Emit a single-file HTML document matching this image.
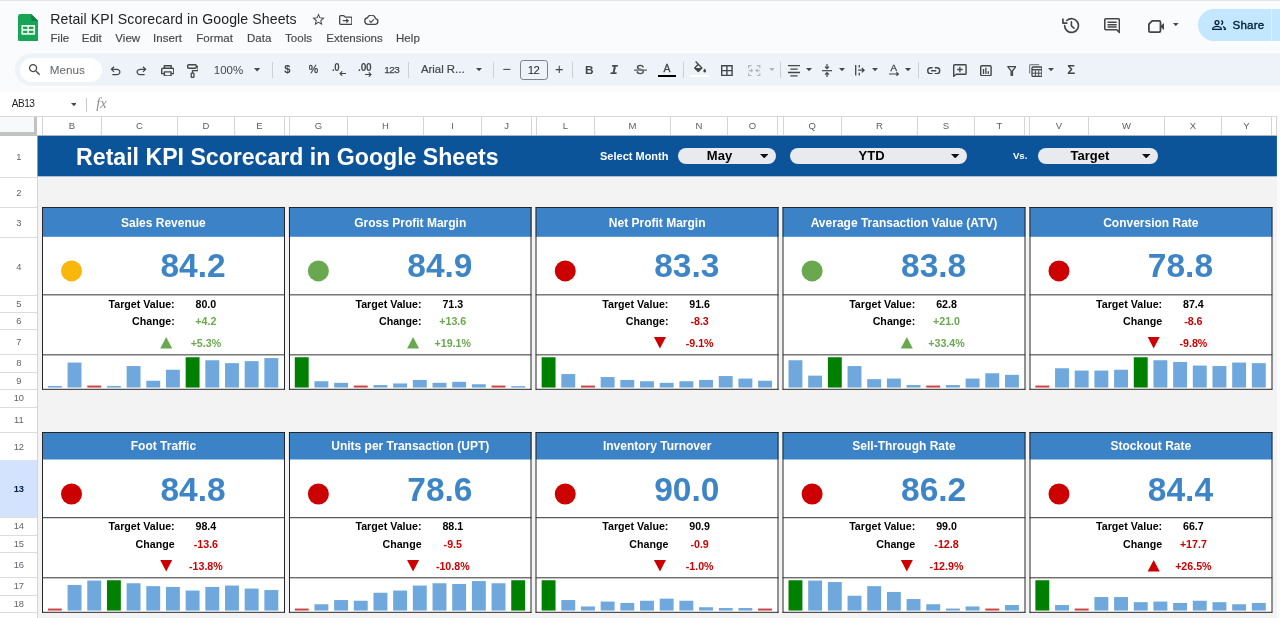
<!DOCTYPE html>
<html lang="en"><head><meta charset="utf-8"><title>Retail KPI Scorecard in Google Sheets</title>
<style>
html,body{margin:0;padding:0}
body{width:1280px;height:618px;overflow:hidden;background:#f9fbfd;font-family:'Liberation Sans', sans-serif;position:relative}
#app{position:absolute;left:0;top:0;width:1280px;height:618px;overflow:hidden;will-change:transform}
#app div, #app svg.a{position:absolute}
.t{white-space:nowrap;overflow:visible}

</style></head><body>
<div id="app">
<div style="left:0px;top:0px;width:1280px;height:1px;background:#e3e5e8"></div>
<svg class="a" style="left:17.9px;top:13.7px" width="20.3" height="27.6" viewBox="0 0 20.3 27.6" ><path d="M2.4 0h10.8l7.1 7.1v18.1a2.4 2.4 0 0 1-2.4 2.4H2.4a2.4 2.4 0 0 1-2.4-2.4V2.4a2.4 2.4 0 0 1 2.4-2.4z" fill="#16a455"/><path d="M13.2 0l7.1 7.1h-5.1a2 2 0 0 1-2-2z" fill="#0c8043"/><path d="M3.4 11.1h13.7v9.6H3.4z M5.1 12.7v2.4h4.3v-2.4z M11 12.7v2.4h4.4v-2.4z M5.1 16.7v2.4h4.3v-2.4z M11 16.7v2.4h4.4v-2.4z" fill="#e8f5e9" fill-rule="evenodd"/></svg>
<div class="t" style="left:50.2px;top:9.4px;height:20px;line-height:20px;font-size:14.1px;color:#1f1f1f;letter-spacing:0.1px">Retail KPI Scorecard in Google Sheets</div>
<div class="t" style="left:50.5px;top:29.7px;height:16px;line-height:16px;font-size:11.5px;color:#444746;letter-spacing:0.04px;-webkit-text-stroke:0.15px #444746">File</div>
<div class="t" style="left:81.8px;top:29.7px;height:16px;line-height:16px;font-size:11.5px;color:#444746;letter-spacing:0.04px;-webkit-text-stroke:0.15px #444746">Edit</div>
<div class="t" style="left:115.3px;top:29.7px;height:16px;line-height:16px;font-size:11.5px;color:#444746;letter-spacing:0.04px;-webkit-text-stroke:0.15px #444746">View</div>
<div class="t" style="left:153px;top:29.7px;height:16px;line-height:16px;font-size:11.5px;color:#444746;letter-spacing:0.04px;-webkit-text-stroke:0.15px #444746">Insert</div>
<div class="t" style="left:196.3px;top:29.7px;height:16px;line-height:16px;font-size:11.5px;color:#444746;letter-spacing:0.04px;-webkit-text-stroke:0.15px #444746">Format</div>
<div class="t" style="left:247px;top:29.7px;height:16px;line-height:16px;font-size:11.5px;color:#444746;letter-spacing:0.04px;-webkit-text-stroke:0.15px #444746">Data</div>
<div class="t" style="left:285px;top:29.7px;height:16px;line-height:16px;font-size:11.5px;color:#444746;letter-spacing:0.04px;-webkit-text-stroke:0.15px #444746">Tools</div>
<div class="t" style="left:326.2px;top:29.7px;height:16px;line-height:16px;font-size:11.5px;color:#444746;letter-spacing:0.04px;-webkit-text-stroke:0.15px #444746">Extensions</div>
<div class="t" style="left:396px;top:29.7px;height:16px;line-height:16px;font-size:11.5px;color:#444746;letter-spacing:0.04px;-webkit-text-stroke:0.15px #444746">Help</div>
<svg class="a" style="left:311.3px;top:12.4px" width="15" height="15" viewBox="0 0 24 24" ><path d="M22 9.24l-7.19-.62L12 2 9.19 8.63 2 9.24l5.46 4.73L5.82 21 12 17.27 18.18 21l-1.63-7.03L22 9.24zM12 15.4l-3.76 2.27 1-4.28-3.32-2.88 4.38-.38L12 6.1l1.71 4.04 4.38.38-3.32 2.88 1 4.28L12 15.4z" fill="#444746" /></svg>
<svg class="a" style="left:338.5px;top:14.8px" width="13.6" height="10" viewBox="0 0 13.6 10" ><path d="M0.7 1.6a0.9 0.9 0 0 1 .9-.9h3.2l1.4 1.4h5.8a0.9 0.9 0 0 1 .9.9v5.4a0.9 0.9 0 0 1-.9.9H1.6a0.9 0.9 0 0 1-.9-.9z" fill="none" stroke="#444746" stroke-width="1.3" stroke-linejoin="round"/><path d="M3.8 5.7h5.2M7.3 3.8l1.9 1.9-1.9 1.9" fill="none" stroke="#444746" stroke-width="1.2"/></svg>
<svg class="a" style="left:364px;top:14.8px" width="15" height="10" viewBox="0 0 15 10" ><path d="M4 9.3a3.3 3.3 0 0 1-.5-6.55 4.2 4.2 0 0 1 8 .9A2.85 2.85 0 0 1 11.4 9.3z" fill="none" stroke="#444746" stroke-width="1.3" stroke-linejoin="round"/><path d="M5.3 5.7l1.6 1.6 3-3" fill="none" stroke="#444746" stroke-width="1.2"/></svg>
<svg class="a" style="left:1062.4px;top:16.9px" width="17.6" height="17" viewBox="0 0 17.6 17" ><path d="M2.6 8.5a6.9 6.9 0 1 0 2.2-5" fill="none" stroke="#444746" stroke-width="1.7" stroke-linecap="round"/><path d="M0.9 2.2v3.9h3.9" fill="none" stroke="#444746" stroke-width="1.7" stroke-linecap="round" stroke-linejoin="round"/><path d="M9.4 4.8v4l2.6 2.3" fill="none" stroke="#444746" stroke-width="1.6" stroke-linecap="round" stroke-linejoin="round"/></svg>
<svg class="a" style="left:1103.6px;top:17.6px" width="16.6" height="16" viewBox="0 0 16.6 16" ><path d="M1.8 0.8h12.6a1 1 0 0 1 1 1v12.6l-2.7-2.7H1.8a1 1 0 0 1-1-1V1.8a1 1 0 0 1 1-1z" fill="none" stroke="#444746" stroke-width="1.6" stroke-linejoin="round"/><path d="M3.5 3.6h9.2v1.5H3.5zM3.5 5.9h9.2v1.5H3.5zM3.5 8.2h9.2v1.5H3.5z" fill="#444746"/></svg>
<svg class="a" style="left:1147.5px;top:19.7px" width="16.8" height="13" viewBox="0 0 16.8 13" ><path d="M4.2 0.9h6.9a1.4 1.4 0 0 1 1.4 1.4v8.4a1.4 1.4 0 0 1-1.4 1.4H2.3a1.4 1.4 0 0 1-1.4-1.4V4.2z" fill="none" stroke="#444746" stroke-width="1.8" stroke-linejoin="round"/><path d="M12 6.5l4.6-3.9v7.8z" fill="#444746"/></svg>
<svg class="a" style="left:1173.0px;top:23.0px" width="5.6" height="3.2" viewBox="0 0 10 5" preserveAspectRatio="none"><path d="M0 0h10L5 5z" fill="#444746"/></svg>
<div style="left:1197.6px;top:9px;width:90px;height:32px;background:#c2e7ff;border-radius:16px 0 0 16px"></div>
<div style="left:1270.6px;top:9px;width:1px;height:32px;background:#e0f2ff"></div>
<svg class="a" style="left:1211.8px;top:19.8px" width="14" height="10.2" viewBox="0 0 14 10.2" ><circle cx="5" cy="2.6" r="1.95" fill="none" stroke="#001d35" stroke-width="1.3"/><path d="M0.7 9.4v-.7c0-1.5 2.6-2.3 4.3-2.3s4.3.8 4.3 2.3v.7z" fill="none" stroke="#001d35" stroke-width="1.3" stroke-linejoin="round"/><path d="M9.2 0.7a1.95 1.95 0 0 1 0 3.8M11 6.6c1.2.4 2.3 1.1 2.3 2.1v.7h-1.6" fill="none" stroke="#001d35" stroke-width="1.3"/></svg>
<div class="t" style="left:1232.6px;top:16.7px;height:16px;line-height:16px;font-size:11.6px;color:#001d35;font-weight:400;letter-spacing:0.15px;-webkit-text-stroke:0.35px #001d35">Share</div>
<svg class="a" style="left:0px;top:50px" width="1280" height="40" viewBox="0 50 1280 40" ><rect x="15" y="53.5" width="1300" height="32.2" rx="16" fill="#eef2f9"/></svg>
<div style="left:20.4px;top:57.6px;width:81.6px;height:24.4px;background:#fff;border-radius:12.2px"></div>
<svg class="a" style="left:27px;top:61.8px" width="15.4" height="15.4" viewBox="0 0 24 24" ><path d="M15.5 14h-.79l-.28-.27C15.41 12.59 16 11.11 16 9.5 16 5.91 13.09 3 9.5 3S3 5.91 3 9.5 5.91 16 9.5 16c1.61 0 3.09-.59 4.23-1.57l.27.28v.79l5 4.99L20.49 19l-4.99-5zm-6 0C7.01 14 5 11.99 5 9.5S7.01 5 9.5 5 14 7.01 14 9.5 11.99 14 9.5 14z" fill="#444746" /></svg>
<div class="t" style="left:49.7px;top:61.8px;height:16px;line-height:16px;font-size:11.7px;color:#5f6368">Menus</div>
<svg class="a" style="left:107.9px;top:63.8px" width="15" height="14.2" viewBox="0 0 24 24" preserveAspectRatio="none"><path d="M7 19v-2h7.1q1.575 0 2.738-1T18 13.5q0-1.5-1.162-2.5T14.1 10H7.8l2.6 2.6L9 14 4 9l5-5 1.4 1.4L7.8 8h6.3q2.425 0 4.163 1.575T20 13.5q0 2.35-1.737 3.925T14.1 19z" fill="#444746"/></svg>
<svg class="a" style="left:134px;top:63.8px" width="15" height="14.2" viewBox="0 0 24 24" preserveAspectRatio="none"><path d="M7 19v-2h7.1q1.575 0 2.738-1T18 13.5q0-1.5-1.162-2.5T14.1 10H7.8l2.6 2.6L9 14 4 9l5-5 1.4 1.4L7.8 8h6.3q2.425 0 4.163 1.575T20 13.5q0 2.35-1.737 3.925T14.1 19z" fill="#444746" transform="translate(24 0) scale(-1 1)"/></svg>
<svg class="a" style="left:160.7px;top:64.6px" width="13.5" height="11.6" viewBox="0 0 13.5 11.6" ><path d="M3.4 3.2V0.7h6.7v2.5" fill="none" stroke="#444746" stroke-width="1.4"/><path d="M3.2 8.6H0.7V4.6a1.4 1.4 0 0 1 1.4-1.4h9.3a1.4 1.4 0 0 1 1.4 1.4v4h-2.5" fill="none" stroke="#444746" stroke-width="1.4" stroke-linejoin="round"/><path d="M3.4 6.9h6.7v4H3.4z" fill="none" stroke="#444746" stroke-width="1.4" stroke-linejoin="round"/></svg>
<svg class="a" style="left:186.6px;top:63.8px" width="11.8" height="14.2" viewBox="0 0 11.8 14.2" ><rect x="0.7" y="0.7" width="8.6" height="3.6" rx="1" fill="none" stroke="#444746" stroke-width="1.4"/><path d="M9.3 2.5h1.8v4.1H5.5v2.4" fill="none" stroke="#444746" stroke-width="1.3" stroke-linejoin="round"/><rect x="4.2" y="9.1" width="2.7" height="4.4" rx="0.7" fill="none" stroke="#444746" stroke-width="1.3"/></svg>
<div class="t" style="left:213.8px;top:62.1px;height:16px;line-height:16px;font-size:11.5px;color:#444746">100%</div>
<svg class="a" style="left:254.4px;top:68.3px" width="6.2" height="3.4" viewBox="0 0 10 5" preserveAspectRatio="none"><path d="M0 0h10L5 5z" fill="#444746"/></svg>
<div style="left:271.5px;top:61.5px;width:1px;height:16.5px;background:#cdd0d5"></div>
<div class="t" style="left:284.2px;top:61.2px;height:16px;line-height:16px;font-size:11.2px;color:#444746;font-weight:700">$</div>
<div class="t" style="left:308.8px;top:61.3px;height:16px;line-height:16px;font-size:10.6px;color:#444746;-webkit-text-stroke:0.35px #444746">%</div>
<div class="t" style="left:332.1px;top:59.4px;height:16px;line-height:16px;font-size:11px;color:#444746;font-weight:700;letter-spacing:-0.4px;transform:scaleX(0.88);transform-origin:0 50%">.0</div>
<svg class="a" style="left:339.2px;top:71.3px" width="7" height="5" viewBox="0 0 7 5" ><path d="M7 2.5H1.2M3.2 0.3L1 2.5l2.2 2.2" fill="none" stroke="#444746" stroke-width="1.1"/></svg>
<div class="t" style="left:357.7px;top:59.4px;height:16px;line-height:16px;font-size:11px;color:#444746;font-weight:700;letter-spacing:-0.2px;transform:scaleX(0.92);transform-origin:0 50%">.00</div>
<svg class="a" style="left:364.6px;top:71.9px" width="7" height="5" viewBox="0 0 7 5" ><path d="M0 2.5h5.8M3.8 0.3L6 2.5 3.8 4.7" fill="none" stroke="#444746" stroke-width="1.1"/></svg>
<div class="t" style="left:384.2px;top:62px;height:16px;line-height:16px;font-size:9.9px;color:#444746;letter-spacing:-0.4px;-webkit-text-stroke:0.25px #444746">123</div>
<div style="left:407.5px;top:61.5px;width:1px;height:16.5px;background:#cdd0d5"></div>
<div class="t" style="left:420.9px;top:60.9px;height:16px;line-height:16px;font-size:11.4px;color:#444746;-webkit-text-stroke:0.2px #444746">Arial R...</div>
<svg class="a" style="left:475.9px;top:68.1px" width="6" height="3.2" viewBox="0 0 10 5" preserveAspectRatio="none"><path d="M0 0h10L5 5z" fill="#444746"/></svg>
<div style="left:493.0px;top:61.5px;width:1px;height:16.5px;background:#cdd0d5"></div>
<div class="t" style="left:502.6px;top:61.1px;height:16px;line-height:16px;font-size:14.6px;color:#444746">−</div>
<div style="left:520px;top:60.4px;width:27.5px;height:19.4px;border:1px solid #7d8287;border-radius:3.2px;box-sizing:border-box"></div>
<div class="t" style="left:520px;top:62px;height:16px;line-height:16px;font-size:11.4px;color:#1f1f1f;width:27.5px;text-align:center;letter-spacing:-0.6px;text-indent:-0.6px">12</div>
<div class="t" style="left:555.1px;top:61.1px;height:16px;line-height:16px;font-size:14.6px;color:#444746">+</div>
<div style="left:572.3px;top:61.5px;width:1px;height:16.5px;background:#cdd0d5"></div>
<div class="t" style="left:584.9px;top:61.9px;height:16px;line-height:16px;font-size:11.8px;color:#444746;font-weight:700">B</div>
<div class="t" style="left:610.3px;top:63px;height:16px;line-height:16px;font-size:12.8px;-webkit-text-stroke:0.2px #444746;color:#444746;font-weight:700;font-style:italic;font-family:'Liberation Mono',monospace">I</div>
<div class="t" style="left:636.1px;top:61.6px;height:16px;line-height:16px;font-size:12.6px;color:#444746;-webkit-text-stroke:0.3px #444746">S</div>
<svg class="a" style="left:633.6px;top:68.6px" width="13.4" height="2.4" viewBox="0 0 13.4 2.4" ><rect x="0" y="0" width="13.4" height="0.55" fill="#eef2f9"/><rect x="0" y="0.55" width="13.4" height="1.25" fill="#444746"/><rect x="0" y="1.8" width="13.4" height="0.6" fill="#eef2f9"/></svg>
<div class="t" style="left:663.4px;top:60.8px;height:16px;line-height:16px;font-size:10.4px;color:#444746;-webkit-text-stroke:0.3px #444746">A</div>
<div style="left:658px;top:74.7px;width:18.3px;height:2.6px;background:#000"></div>
<div style="left:683.0px;top:61.5px;width:1px;height:16.5px;background:#cdd0d5"></div>
<svg class="a" style="left:693.5px;top:61px" width="12.4" height="12" viewBox="0 0 12.4 12" ><path d="M1.6 0.6l6.3 6.3-3.6 3.6-3.6-3.6 3.9-3.9" fill="none" stroke="#444746" stroke-width="1.4" stroke-linejoin="round"/><path d="M1.2 6.9h6.7l-3.6 3.6z" fill="#444746"/><path d="M10.7 7.6s1.4 1.6 1.4 2.5a1.4 1.4 0 0 1-2.8 0c0-.9 1.4-2.5 1.4-2.5z" fill="#444746"/></svg>
<div style="left:690px;top:74.7px;width:19px;height:2.6px;background:#fff"></div>
<svg class="a" style="left:721.2px;top:65px" width="11.8" height="11.2" viewBox="0 0 11.8 11.2" ><path d="M0.7 0.7h10.4v9.8H0.7zM5.9 0.7v9.8M0.7 5.6h10.4" fill="none" stroke="#444746" stroke-width="1.4"/></svg>
<svg class="a" style="left:748.4px;top:65px" width="12.4" height="11.2" viewBox="0 0 12.4 11.2" ><path d="M0.6 3.2V0.6h3M8.8 0.6h3v2.6M11.8 8v2.6h-3M3.6 10.6h-3V8" fill="none" stroke="#b4b8bd" stroke-width="1.2"/><path d="M0.6 5.6h3.6M2.9 4l1.6 1.6-1.6 1.6M11.8 5.6H8.2M9.5 4L7.9 5.6l1.6 1.6" fill="none" stroke="#b4b8bd" stroke-width="1.1"/></svg>
<svg class="a" style="left:768.7px;top:68.3px" width="5.8" height="3.2" viewBox="0 0 10 5" preserveAspectRatio="none"><path d="M0 0h10L5 5z" fill="#b4b8bd"/></svg>
<div style="left:779.9px;top:61.5px;width:1px;height:16.5px;background:#cdd0d5"></div>
<svg class="a" style="left:787.7px;top:64.8px" width="12" height="12" viewBox="0 0 12 12" ><path d="M0 0.7h12M2.4 4.1h7.2M0 7.5h12M2.4 10.9h7.2" stroke="#444746" stroke-width="1.3"/></svg>
<svg class="a" style="left:806.0px;top:68.3px" width="6" height="3.2" viewBox="0 0 10 5" preserveAspectRatio="none"><path d="M0 0h10L5 5z" fill="#444746"/></svg>
<svg class="a" style="left:822.4px;top:63.6px" width="10" height="13.4" viewBox="0 0 10 13.4" ><path d="M0 6.7h10" stroke="#444746" stroke-width="1.2"/><path d="M5 0v4.4M3 2.7l2 2 2-2M5 13.4V9M3 10.7l2-2 2 2" fill="none" stroke="#444746" stroke-width="1.2"/></svg>
<svg class="a" style="left:838.5px;top:68.3px" width="6" height="3.2" viewBox="0 0 10 5" preserveAspectRatio="none"><path d="M0 0h10L5 5z" fill="#444746"/></svg>
<svg class="a" style="left:855px;top:65.4px" width="10.2" height="10.4" viewBox="0 0 10.2 10.4" ><path d="M0.7 0v10.4M4.3 0v2.6M4.3 7.8v2.6" stroke="#444746" stroke-width="1.3"/><path d="M3.2 5.2h5.6M6.8 3l2.3 2.2-2.3 2.2" fill="none" stroke="#444746" stroke-width="1.3"/></svg>
<svg class="a" style="left:872.0px;top:68.3px" width="6" height="3.2" viewBox="0 0 10 5" preserveAspectRatio="none"><path d="M0 0h10L5 5z" fill="#444746"/></svg>
<div class="t" style="left:890.6px;top:59.7px;height:16px;line-height:16px;font-size:9.8px;color:#444746;-webkit-text-stroke:0.3px #444746">A</div>
<svg class="a" style="left:889px;top:72.1px" width="10.6" height="4" viewBox="0 0 10.6 4" ><path d="M0 2h9M7.4 0.3l2 1.7-2 1.7" fill="none" stroke="#444746" stroke-width="1.2"/></svg>
<svg class="a" style="left:905.3px;top:68.3px" width="6" height="3.2" viewBox="0 0 10 5" preserveAspectRatio="none"><path d="M0 0h10L5 5z" fill="#444746"/></svg>
<div style="left:918.0px;top:61.5px;width:1px;height:16.5px;background:#cdd0d5"></div>
<svg class="a" style="left:927.2px;top:66.5px" width="13.4" height="7.4" viewBox="0 0 13.4 7.4" ><path d="M5.6 0.7H3.7a3 3 0 0 0 0 6h1.9M7.8 0.7h1.9a3 3 0 0 1 0 6H7.8M4.2 3.7h5" fill="none" stroke="#444746" stroke-width="1.4"/></svg>
<svg class="a" style="left:953.3px;top:64px" width="13.8" height="12.6" viewBox="0 0 13.8 12.6" ><path d="M1.5 0.7h10.8a0.8 0.8 0 0 1 .8.8v8a0.8 0.8 0 0 1-.8.8H3.2l-2.5 2V1.5a0.8 0.8 0 0 1 .8-.8z" fill="none" stroke="#444746" stroke-width="1.4" stroke-linejoin="round"/><path d="M6.9 2.8v5.4M4.2 5.5h5.4" stroke="#444746" stroke-width="1.3"/></svg>
<svg class="a" style="left:980.3px;top:64.6px" width="11.8" height="11.4" viewBox="0 0 11.8 11.4" ><rect x="0.7" y="0.7" width="10.4" height="10" rx="1.2" fill="none" stroke="#444746" stroke-width="1.4"/><path d="M3.5 4v5M5.9 2.8v6.2M8.3 6.2v2.8" stroke="#444746" stroke-width="1.3"/></svg>
<svg class="a" style="left:1006.8px;top:65.5px" width="9.6" height="10" viewBox="0 0 9.6 10" ><path d="M0.8 0.7h8L5.5 4.9v4.4H4.1V4.9z" fill="none" stroke="#444746" stroke-width="1.3" stroke-linejoin="round"/></svg>
<svg class="a" style="left:1028.6px;top:64px" width="13.6" height="13" viewBox="0 0 13.6 13" ><path d="M0.6 9.6V1.6a1 1 0 0 1 1-1h8.6" fill="none" stroke="#80868b" stroke-width="1.2"/><rect x="3" y="3" width="10" height="9.4" rx="1" fill="none" stroke="#444746" stroke-width="1.3"/><path d="M3 5h10v1.4H3z" fill="#444746"/><path d="M3 9.2h10M6.4 6.4v6M9.7 6.4v6" stroke="#444746" stroke-width="1"/></svg>
<svg class="a" style="left:1048.0px;top:68.3px" width="6" height="3.2" viewBox="0 0 10 5" preserveAspectRatio="none"><path d="M0 0h10L5 5z" fill="#444746"/></svg>
<div class="t" style="left:1067.3px;top:62.3px;height:16px;line-height:16px;font-size:13.2px;color:#444746;font-weight:700">Σ</div>
<div style="left:0px;top:92.4px;width:1280px;height:23.6px;background:#fff"></div>
<div class="t" style="left:11.8px;top:96.1px;height:16px;line-height:16px;font-size:10.1px;color:#1f1f1f;letter-spacing:-0.55px">AB13</div>
<svg class="a" style="left:70.5px;top:102.5px" width="5.8" height="3.2" viewBox="0 0 10 5" preserveAspectRatio="none"><path d="M0 0h10L5 5z" fill="#444746"/></svg>
<div style="left:85.8px;top:98.2px;width:1px;height:13.799999999999997px;background:#c7c7c7"></div>
<div class="t" style="left:96.3px;top:95.3px;height:16px;line-height:16px;font-size:14.5px;color:#8a8e92;font-style:italic;font-family:'Liberation Serif',serif;letter-spacing:-0.2px">fx</div>
<div style="left:0px;top:116px;width:1280px;height:502px;background:#f3f3f3"></div>
<div style="left:1277px;top:116px;width:3px;height:502px;background:#f9fbfd"></div>
<div style="left:0px;top:116px;width:1277px;height:20px;background:#fff;border-top:1px solid #d9d9d9;border-bottom:1px solid #d0d0d0;box-sizing:border-box"></div>
<div style="left:0px;top:136px;width:37.5px;height:482px;background:#fff;border-right:1px solid #d5d5d5;box-sizing:border-box"></div>
<div style="left:0px;top:117px;width:37px;height:18px;background:#f8f9fa"></div>
<div style="left:34.4px;top:117px;width:3px;height:19px;background:#c1c3c2"></div>
<div style="left:0px;top:132px;width:37.4px;height:3.6px;background:#c1c3c2"></div>
<div style="left:41.8px;top:117px;width:1px;height:19px;background:#d5d5d5"></div>
<div class="t hd" style="left:42.3px;top:116.8px;width:59.1px;height:18px;line-height:18px;text-align:center;font-size:9.5px;color:#5a5d60">B</div>
<div style="left:100.9px;top:117px;width:1px;height:19px;background:#d5d5d5"></div>
<div class="t hd" style="left:101.4px;top:116.8px;width:75.9px;height:18px;line-height:18px;text-align:center;font-size:9.5px;color:#5a5d60">C</div>
<div style="left:176.8px;top:117px;width:1px;height:19px;background:#d5d5d5"></div>
<div class="t hd" style="left:177.3px;top:116.8px;width:57.1px;height:18px;line-height:18px;text-align:center;font-size:9.5px;color:#5a5d60">D</div>
<div style="left:233.9px;top:117px;width:1px;height:19px;background:#d5d5d5"></div>
<div class="t hd" style="left:234.4px;top:116.8px;width:50.2px;height:18px;line-height:18px;text-align:center;font-size:9.5px;color:#5a5d60">E</div>
<div style="left:284.1px;top:117px;width:1px;height:19px;background:#d5d5d5"></div>
<div style="left:289.1px;top:117px;width:1px;height:19px;background:#d5d5d5"></div>
<div class="t hd" style="left:289.6px;top:116.8px;width:57.9px;height:18px;line-height:18px;text-align:center;font-size:9.5px;color:#5a5d60">G</div>
<div style="left:347.0px;top:117px;width:1px;height:19px;background:#d5d5d5"></div>
<div class="t hd" style="left:347.5px;top:116.8px;width:76.0px;height:18px;line-height:18px;text-align:center;font-size:9.5px;color:#5a5d60">H</div>
<div style="left:423.0px;top:117px;width:1px;height:19px;background:#d5d5d5"></div>
<div class="t hd" style="left:423.5px;top:116.8px;width:58.0px;height:18px;line-height:18px;text-align:center;font-size:9.5px;color:#5a5d60">I</div>
<div style="left:481.0px;top:117px;width:1px;height:19px;background:#d5d5d5"></div>
<div class="t hd" style="left:481.5px;top:116.8px;width:50.0px;height:18px;line-height:18px;text-align:center;font-size:9.5px;color:#5a5d60">J</div>
<div style="left:531.0px;top:117px;width:1px;height:19px;background:#d5d5d5"></div>
<div style="left:535.8px;top:117px;width:1px;height:19px;background:#d5d5d5"></div>
<div class="t hd" style="left:536.3px;top:116.8px;width:58.3px;height:18px;line-height:18px;text-align:center;font-size:9.5px;color:#5a5d60">L</div>
<div style="left:594.1px;top:117px;width:1px;height:19px;background:#d5d5d5"></div>
<div class="t hd" style="left:594.6px;top:116.8px;width:75.8px;height:18px;line-height:18px;text-align:center;font-size:9.5px;color:#5a5d60">M</div>
<div style="left:669.9px;top:117px;width:1px;height:19px;background:#d5d5d5"></div>
<div class="t hd" style="left:670.4px;top:116.8px;width:57.1px;height:18px;line-height:18px;text-align:center;font-size:9.5px;color:#5a5d60">N</div>
<div style="left:727.0px;top:117px;width:1px;height:19px;background:#d5d5d5"></div>
<div class="t hd" style="left:727.5px;top:116.8px;width:50.1px;height:18px;line-height:18px;text-align:center;font-size:9.5px;color:#5a5d60">O</div>
<div style="left:777.1px;top:117px;width:1px;height:19px;background:#d5d5d5"></div>
<div style="left:782.6px;top:117px;width:1px;height:19px;background:#d5d5d5"></div>
<div class="t hd" style="left:783.1px;top:116.8px;width:58.2px;height:18px;line-height:18px;text-align:center;font-size:9.5px;color:#5a5d60">Q</div>
<div style="left:840.8px;top:117px;width:1px;height:19px;background:#d5d5d5"></div>
<div class="t hd" style="left:841.3px;top:116.8px;width:76.2px;height:18px;line-height:18px;text-align:center;font-size:9.5px;color:#5a5d60">R</div>
<div style="left:917.0px;top:117px;width:1px;height:19px;background:#d5d5d5"></div>
<div class="t hd" style="left:917.5px;top:116.8px;width:56.9px;height:18px;line-height:18px;text-align:center;font-size:9.5px;color:#5a5d60">S</div>
<div style="left:973.9px;top:117px;width:1px;height:19px;background:#d5d5d5"></div>
<div class="t hd" style="left:974.4px;top:116.8px;width:50.1px;height:18px;line-height:18px;text-align:center;font-size:9.5px;color:#5a5d60">T</div>
<div style="left:1024.0px;top:117px;width:1px;height:19px;background:#d5d5d5"></div>
<div style="left:1029.0px;top:117px;width:1px;height:19px;background:#d5d5d5"></div>
<div class="t hd" style="left:1029.5px;top:116.8px;width:59.0px;height:18px;line-height:18px;text-align:center;font-size:9.5px;color:#5a5d60">V</div>
<div style="left:1088.0px;top:117px;width:1px;height:19px;background:#d5d5d5"></div>
<div class="t hd" style="left:1088.5px;top:116.8px;width:76.0px;height:18px;line-height:18px;text-align:center;font-size:9.5px;color:#5a5d60">W</div>
<div style="left:1164.0px;top:117px;width:1px;height:19px;background:#d5d5d5"></div>
<div class="t hd" style="left:1164.5px;top:116.8px;width:57.0px;height:18px;line-height:18px;text-align:center;font-size:9.5px;color:#5a5d60">X</div>
<div style="left:1221.0px;top:117px;width:1px;height:19px;background:#d5d5d5"></div>
<div class="t hd" style="left:1221.5px;top:116.8px;width:50.0px;height:18px;line-height:18px;text-align:center;font-size:9.5px;color:#5a5d60">Y</div>
<div style="left:1271.0px;top:117px;width:1px;height:19px;background:#d5d5d5"></div>
<div style="left:1276.2px;top:117px;width:1px;height:19px;background:#d5d5d5"></div>
<div class="t hd" style="left:0.3px;top:136.7px;width:37px;height:41px;line-height:41px;text-align:center;font-size:9.3px;color:#5f6368;">1</div>
<div style="left:0px;top:176.5px;width:37px;height:1px;background:#dcdcdc"></div>
<div class="t hd" style="left:0.3px;top:177.7px;width:37px;height:30px;line-height:30px;text-align:center;font-size:9.3px;color:#5f6368;">2</div>
<div style="left:0px;top:206.5px;width:37px;height:1px;background:#dcdcdc"></div>
<div class="t hd" style="left:0.3px;top:207.7px;width:37px;height:30px;line-height:30px;text-align:center;font-size:9.3px;color:#5f6368;">3</div>
<div style="left:0px;top:236.5px;width:37px;height:1px;background:#dcdcdc"></div>
<div class="t hd" style="left:0.3px;top:237.7px;width:37px;height:58px;line-height:58px;text-align:center;font-size:9.3px;color:#5f6368;">4</div>
<div style="left:0px;top:294.5px;width:37px;height:1px;background:#dcdcdc"></div>
<div class="t hd" style="left:0.3px;top:295.7px;width:37px;height:17px;line-height:17px;text-align:center;font-size:9.3px;color:#5f6368;">5</div>
<div style="left:0px;top:311.5px;width:37px;height:1px;background:#dcdcdc"></div>
<div class="t hd" style="left:0.3px;top:312.7px;width:37px;height:17.5px;line-height:17.5px;text-align:center;font-size:9.3px;color:#5f6368;">6</div>
<div style="left:0px;top:329.0px;width:37px;height:1px;background:#dcdcdc"></div>
<div class="t hd" style="left:0.3px;top:330.2px;width:37px;height:25.0px;line-height:25.0px;text-align:center;font-size:9.3px;color:#5f6368;">7</div>
<div style="left:0px;top:354.0px;width:37px;height:1px;background:#dcdcdc"></div>
<div class="t hd" style="left:0.3px;top:355.2px;width:37px;height:17.5px;line-height:17.5px;text-align:center;font-size:9.3px;color:#5f6368;">8</div>
<div style="left:0px;top:371.5px;width:37px;height:1px;background:#dcdcdc"></div>
<div class="t hd" style="left:0.3px;top:372.7px;width:37px;height:17.5px;line-height:17.5px;text-align:center;font-size:9.3px;color:#5f6368;">9</div>
<div style="left:0px;top:389.0px;width:37px;height:1px;background:#dcdcdc"></div>
<div class="t hd" style="left:0.3px;top:390.2px;width:37px;height:17.5px;line-height:17.5px;text-align:center;font-size:9.3px;color:#5f6368;">10</div>
<div style="left:0px;top:406.5px;width:37px;height:1px;background:#dcdcdc"></div>
<div class="t hd" style="left:0.3px;top:407.7px;width:37px;height:25px;line-height:25px;text-align:center;font-size:9.3px;color:#5f6368;">11</div>
<div style="left:0px;top:431.5px;width:37px;height:1px;background:#dcdcdc"></div>
<div class="t hd" style="left:0.3px;top:432.7px;width:37px;height:28px;line-height:28px;text-align:center;font-size:9.3px;color:#5f6368;">12</div>
<div style="left:0px;top:459.5px;width:37px;height:1px;background:#dcdcdc"></div>
<div style="left:0px;top:460px;width:37px;height:57.5px;background:#d3e3fd"></div>
<div class="t hd" style="left:0.3px;top:460.7px;width:37px;height:57.5px;line-height:57.5px;text-align:center;font-size:9.3px;color:#041e49;font-weight:700;">13</div>
<div style="left:0px;top:517.0px;width:37px;height:1px;background:#dcdcdc"></div>
<div class="t hd" style="left:0.3px;top:518.2px;width:37px;height:17.5px;line-height:17.5px;text-align:center;font-size:9.3px;color:#5f6368;">14</div>
<div style="left:0px;top:534.5px;width:37px;height:1px;background:#dcdcdc"></div>
<div class="t hd" style="left:0.3px;top:535.7px;width:37px;height:17.5px;line-height:17.5px;text-align:center;font-size:9.3px;color:#5f6368;">15</div>
<div style="left:0px;top:552.0px;width:37px;height:1px;background:#dcdcdc"></div>
<div class="t hd" style="left:0.3px;top:553.2px;width:37px;height:25.0px;line-height:25.0px;text-align:center;font-size:9.3px;color:#5f6368;">16</div>
<div style="left:0px;top:577.0px;width:37px;height:1px;background:#dcdcdc"></div>
<div class="t hd" style="left:0.3px;top:578.2px;width:37px;height:17.5px;line-height:17.5px;text-align:center;font-size:9.3px;color:#5f6368;">17</div>
<div style="left:0px;top:594.5px;width:37px;height:1px;background:#dcdcdc"></div>
<div class="t hd" style="left:0.3px;top:595.7px;width:37px;height:17.5px;line-height:17.5px;text-align:center;font-size:9.3px;color:#5f6368;">18</div>
<div style="left:0px;top:612.0px;width:37px;height:1px;background:#dcdcdc"></div>
<svg class="a" style="left:0;top:0" width="1280" height="618" viewBox="0 0 1280 618"><rect x="37.6" y="135.8" width="1239.3" height="40.5" fill="#0c549a"/><rect x="42.0" y="207" width="242.8" height="182.8" fill="#fff"/><rect x="42.0" y="207" width="242.8" height="29.8" fill="#3c82c6"/><rect x="42.0" y="207" width="242.8" height="1" fill="#262626"/><rect x="42.0" y="388.8" width="242.8" height="1" fill="#262626"/><rect x="42.0" y="207" width="1" height="182.8" fill="#262626"/><rect x="284.0" y="207" width="1" height="182.8" fill="#262626"/><rect x="42.0" y="294.35" width="242.8" height="1" fill="#333"/><rect x="42.0" y="354.35" width="242.8" height="1" fill="#333"/><circle cx="71.5" cy="270.9" r="10.5" fill="#f9b70b"/><polygon points="160.2,348.6 166.2,337.0 172.2,348.6" fill="#6aa84f"/><rect x="47.9" y="385.95" width="13.9" height="1.6" fill="#6fa8dc"/><rect x="67.58" y="362.55" width="13.9" height="25" fill="#6fa8dc"/><rect x="87.26" y="385.55" width="13.9" height="2" fill="#cc4444"/><rect x="106.94" y="385.95" width="13.9" height="1.6" fill="#6fa8dc"/><rect x="126.62" y="366.05" width="13.9" height="21.5" fill="#6fa8dc"/><rect x="146.3" y="380.75" width="13.9" height="6.8" fill="#6fa8dc"/><rect x="165.98" y="369.75" width="13.9" height="17.8" fill="#6fa8dc"/><rect x="185.66" y="357.25" width="13.9" height="30.3" fill="#008000"/><rect x="205.34" y="360.25" width="13.9" height="27.3" fill="#6fa8dc"/><rect x="225.02" y="363.15" width="13.9" height="24.4" fill="#6fa8dc"/><rect x="244.7" y="361.15" width="13.9" height="26.4" fill="#6fa8dc"/><rect x="264.38" y="358.05" width="13.9" height="29.5" fill="#6fa8dc"/><rect x="288.87" y="207" width="242.8" height="182.8" fill="#fff"/><rect x="288.87" y="207" width="242.8" height="29.8" fill="#3c82c6"/><rect x="288.87" y="207" width="242.8" height="1" fill="#262626"/><rect x="288.87" y="388.8" width="242.8" height="1" fill="#262626"/><rect x="289.0" y="207" width="1" height="182.8" fill="#262626"/><rect x="530.5" y="207" width="1" height="182.8" fill="#262626"/><rect x="288.87" y="294.35" width="242.8" height="1" fill="#333"/><rect x="288.87" y="354.35" width="242.8" height="1" fill="#333"/><circle cx="318.37" cy="270.9" r="10.5" fill="#6aa84f"/><polygon points="407.07,348.6 413.07,337.0 419.07,348.6" fill="#6aa84f"/><rect x="294.77" y="357.25" width="13.9" height="30.3" fill="#008000"/><rect x="314.45" y="381.25" width="13.9" height="6.3" fill="#6fa8dc"/><rect x="334.13" y="382.85" width="13.9" height="4.7" fill="#6fa8dc"/><rect x="353.81" y="385.55" width="13.9" height="2" fill="#cc4444"/><rect x="373.49" y="385.05" width="13.9" height="2.5" fill="#6fa8dc"/><rect x="393.17" y="383.45" width="13.9" height="4.1" fill="#6fa8dc"/><rect x="412.85" y="379.95" width="13.9" height="7.6" fill="#6fa8dc"/><rect x="432.53" y="382.85" width="13.9" height="4.7" fill="#6fa8dc"/><rect x="452.21" y="381.85" width="13.9" height="5.7" fill="#6fa8dc"/><rect x="471.89" y="384.25" width="13.9" height="3.3" fill="#6fa8dc"/><rect x="491.57" y="385.55" width="13.9" height="2" fill="#cc4444"/><rect x="511.25" y="386.15" width="13.9" height="1.4" fill="#6fa8dc"/><rect x="535.74" y="207" width="242.8" height="182.8" fill="#fff"/><rect x="535.74" y="207" width="242.8" height="29.8" fill="#3c82c6"/><rect x="535.74" y="207" width="242.8" height="1" fill="#262626"/><rect x="535.74" y="388.8" width="242.8" height="1" fill="#262626"/><rect x="535.5" y="207" width="1" height="182.8" fill="#262626"/><rect x="777.5" y="207" width="1" height="182.8" fill="#262626"/><rect x="535.74" y="294.35" width="242.8" height="1" fill="#333"/><rect x="535.74" y="354.35" width="242.8" height="1" fill="#333"/><circle cx="565.24" cy="270.9" r="10.5" fill="#cc0000"/><polygon points="653.94,337.0 665.94,337.0 659.94,348.6" fill="#cc0000"/><rect x="541.64" y="357.25" width="13.9" height="30.3" fill="#008000"/><rect x="561.32" y="374.05" width="13.9" height="13.5" fill="#6fa8dc"/><rect x="581.0" y="385.55" width="13.9" height="2" fill="#cc4444"/><rect x="600.68" y="377.05" width="13.9" height="10.5" fill="#6fa8dc"/><rect x="620.36" y="379.95" width="13.9" height="7.6" fill="#6fa8dc"/><rect x="640.04" y="381.25" width="13.9" height="6.3" fill="#6fa8dc"/><rect x="659.72" y="382.85" width="13.9" height="4.7" fill="#6fa8dc"/><rect x="679.4" y="381.25" width="13.9" height="6.3" fill="#6fa8dc"/><rect x="699.08" y="379.95" width="13.9" height="7.6" fill="#6fa8dc"/><rect x="718.76" y="376.05" width="13.9" height="11.5" fill="#6fa8dc"/><rect x="738.44" y="378.55" width="13.9" height="9" fill="#6fa8dc"/><rect x="758.12" y="380.75" width="13.9" height="6.8" fill="#6fa8dc"/><rect x="782.61" y="207" width="242.8" height="182.8" fill="#fff"/><rect x="782.61" y="207" width="242.8" height="29.8" fill="#3c82c6"/><rect x="782.61" y="207" width="242.8" height="1" fill="#262626"/><rect x="782.61" y="388.8" width="242.8" height="1" fill="#262626"/><rect x="782.5" y="207" width="1" height="182.8" fill="#262626"/><rect x="1024.5" y="207" width="1" height="182.8" fill="#262626"/><rect x="782.61" y="294.35" width="242.8" height="1" fill="#333"/><rect x="782.61" y="354.35" width="242.8" height="1" fill="#333"/><circle cx="812.11" cy="270.9" r="10.5" fill="#6aa84f"/><polygon points="900.8100000000001,348.6 906.8100000000001,337.0 912.8100000000001,348.6" fill="#6aa84f"/><rect x="788.51" y="360.25" width="13.9" height="27.3" fill="#6fa8dc"/><rect x="808.19" y="375.65" width="13.9" height="11.9" fill="#6fa8dc"/><rect x="827.87" y="357.25" width="13.9" height="30.3" fill="#008000"/><rect x="847.55" y="366.05" width="13.9" height="21.5" fill="#6fa8dc"/><rect x="867.23" y="379.15" width="13.9" height="8.4" fill="#6fa8dc"/><rect x="886.91" y="378.55" width="13.9" height="9" fill="#6fa8dc"/><rect x="906.59" y="385.05" width="13.9" height="2.5" fill="#6fa8dc"/><rect x="926.27" y="385.55" width="13.9" height="2" fill="#cc4444"/><rect x="945.95" y="385.05" width="13.9" height="2.5" fill="#6fa8dc"/><rect x="965.63" y="378.55" width="13.9" height="9" fill="#6fa8dc"/><rect x="985.31" y="373.25" width="13.9" height="14.3" fill="#6fa8dc"/><rect x="1004.99" y="374.85" width="13.9" height="12.7" fill="#6fa8dc"/><rect x="1029.48" y="207" width="242.8" height="182.8" fill="#fff"/><rect x="1029.48" y="207" width="242.8" height="29.8" fill="#3c82c6"/><rect x="1029.48" y="207" width="242.8" height="1" fill="#262626"/><rect x="1029.48" y="388.8" width="242.8" height="1" fill="#262626"/><rect x="1029.5" y="207" width="1" height="182.8" fill="#262626"/><rect x="1271.5" y="207" width="1" height="182.8" fill="#262626"/><rect x="1029.48" y="294.35" width="242.8" height="1" fill="#333"/><rect x="1029.48" y="354.35" width="242.8" height="1" fill="#333"/><circle cx="1058.98" cy="270.9" r="10.5" fill="#cc0000"/><polygon points="1147.68,337.0 1159.68,337.0 1153.68,348.6" fill="#cc0000"/><rect x="1035.38" y="385.55" width="13.9" height="2" fill="#cc4444"/><rect x="1055.06" y="368.25" width="13.9" height="19.3" fill="#6fa8dc"/><rect x="1074.74" y="370.55" width="13.9" height="17" fill="#6fa8dc"/><rect x="1094.42" y="370.55" width="13.9" height="17" fill="#6fa8dc"/><rect x="1114.1" y="369.75" width="13.9" height="17.8" fill="#6fa8dc"/><rect x="1133.78" y="357.25" width="13.9" height="30.3" fill="#008000"/><rect x="1153.46" y="360.25" width="13.9" height="27.3" fill="#6fa8dc"/><rect x="1173.14" y="361.95" width="13.9" height="25.6" fill="#6fa8dc"/><rect x="1192.82" y="365.55" width="13.9" height="22" fill="#6fa8dc"/><rect x="1212.5" y="366.05" width="13.9" height="21.5" fill="#6fa8dc"/><rect x="1232.18" y="362.55" width="13.9" height="25" fill="#6fa8dc"/><rect x="1251.86" y="363.15" width="13.9" height="24.4" fill="#6fa8dc"/><rect x="42.0" y="432" width="242.8" height="180.8" fill="#fff"/><rect x="42.0" y="432" width="242.8" height="27.5" fill="#3c82c6"/><rect x="42.0" y="432" width="242.8" height="1" fill="#262626"/><rect x="42.0" y="611.8" width="242.8" height="1" fill="#262626"/><rect x="42.0" y="432" width="1" height="180.8" fill="#262626"/><rect x="284.0" y="432" width="1" height="180.8" fill="#262626"/><rect x="42.0" y="517.2" width="242.8" height="1" fill="#333"/><rect x="42.0" y="577.3" width="242.8" height="1" fill="#333"/><circle cx="71.5" cy="494.0" r="10.5" fill="#cc0000"/><polygon points="160.2,560.0 172.2,560.0 166.2,571.6" fill="#cc0000"/><rect x="47.9" y="608.55" width="13.9" height="2" fill="#cc4444"/><rect x="67.58" y="584.95" width="13.9" height="25.6" fill="#6fa8dc"/><rect x="87.26" y="580.55" width="13.9" height="30" fill="#6fa8dc"/><rect x="106.94" y="580.25" width="13.9" height="30.3" fill="#008000"/><rect x="126.62" y="583.25" width="13.9" height="27.3" fill="#6fa8dc"/><rect x="146.3" y="586.15" width="13.9" height="24.4" fill="#6fa8dc"/><rect x="165.98" y="586.95" width="13.9" height="23.6" fill="#6fa8dc"/><rect x="185.66" y="590.55" width="13.9" height="20" fill="#6fa8dc"/><rect x="205.34" y="586.95" width="13.9" height="23.6" fill="#6fa8dc"/><rect x="225.02" y="585.55" width="13.9" height="25" fill="#6fa8dc"/><rect x="244.7" y="588.55" width="13.9" height="22" fill="#6fa8dc"/><rect x="264.38" y="590.05" width="13.9" height="20.5" fill="#6fa8dc"/><rect x="288.87" y="432" width="242.8" height="180.8" fill="#fff"/><rect x="288.87" y="432" width="242.8" height="27.5" fill="#3c82c6"/><rect x="288.87" y="432" width="242.8" height="1" fill="#262626"/><rect x="288.87" y="611.8" width="242.8" height="1" fill="#262626"/><rect x="289.0" y="432" width="1" height="180.8" fill="#262626"/><rect x="530.5" y="432" width="1" height="180.8" fill="#262626"/><rect x="288.87" y="517.2" width="242.8" height="1" fill="#333"/><rect x="288.87" y="577.3" width="242.8" height="1" fill="#333"/><circle cx="318.37" cy="494.0" r="10.5" fill="#cc0000"/><polygon points="407.07,560.0 419.07,560.0 413.07,571.6" fill="#cc0000"/><rect x="294.77" y="608.55" width="13.9" height="2" fill="#cc4444"/><rect x="314.45" y="604.25" width="13.9" height="6.3" fill="#6fa8dc"/><rect x="334.13" y="600.05" width="13.9" height="10.5" fill="#6fa8dc"/><rect x="353.81" y="600.75" width="13.9" height="9.8" fill="#6fa8dc"/><rect x="373.49" y="592.75" width="13.9" height="17.8" fill="#6fa8dc"/><rect x="393.17" y="590.55" width="13.9" height="20" fill="#6fa8dc"/><rect x="412.85" y="585.55" width="13.9" height="25" fill="#6fa8dc"/><rect x="432.53" y="583.25" width="13.9" height="27.3" fill="#6fa8dc"/><rect x="452.21" y="583.95" width="13.9" height="26.6" fill="#6fa8dc"/><rect x="471.89" y="581.05" width="13.9" height="29.5" fill="#6fa8dc"/><rect x="491.57" y="583.25" width="13.9" height="27.3" fill="#6fa8dc"/><rect x="511.25" y="580.25" width="13.9" height="30.3" fill="#008000"/><rect x="535.74" y="432" width="242.8" height="180.8" fill="#fff"/><rect x="535.74" y="432" width="242.8" height="27.5" fill="#3c82c6"/><rect x="535.74" y="432" width="242.8" height="1" fill="#262626"/><rect x="535.74" y="611.8" width="242.8" height="1" fill="#262626"/><rect x="535.5" y="432" width="1" height="180.8" fill="#262626"/><rect x="777.5" y="432" width="1" height="180.8" fill="#262626"/><rect x="535.74" y="517.2" width="242.8" height="1" fill="#333"/><rect x="535.74" y="577.3" width="242.8" height="1" fill="#333"/><circle cx="565.24" cy="494.0" r="10.5" fill="#cc0000"/><polygon points="653.94,560.0 665.94,560.0 659.94,571.6" fill="#cc0000"/><rect x="541.64" y="580.25" width="13.9" height="30.3" fill="#008000"/><rect x="561.32" y="600.05" width="13.9" height="10.5" fill="#6fa8dc"/><rect x="581.0" y="606.45" width="13.9" height="4.1" fill="#6fa8dc"/><rect x="600.68" y="601.55" width="13.9" height="9" fill="#6fa8dc"/><rect x="620.36" y="602.95" width="13.9" height="7.6" fill="#6fa8dc"/><rect x="640.04" y="600.75" width="13.9" height="9.8" fill="#6fa8dc"/><rect x="659.72" y="598.65" width="13.9" height="11.9" fill="#6fa8dc"/><rect x="679.4" y="600.75" width="13.9" height="9.8" fill="#6fa8dc"/><rect x="699.08" y="607.25" width="13.9" height="3.3" fill="#6fa8dc"/><rect x="718.76" y="608.05" width="13.9" height="2.5" fill="#6fa8dc"/><rect x="738.44" y="608.05" width="13.9" height="2.5" fill="#6fa8dc"/><rect x="758.12" y="608.55" width="13.9" height="2" fill="#cc4444"/><rect x="782.61" y="432" width="242.8" height="180.8" fill="#fff"/><rect x="782.61" y="432" width="242.8" height="27.5" fill="#3c82c6"/><rect x="782.61" y="432" width="242.8" height="1" fill="#262626"/><rect x="782.61" y="611.8" width="242.8" height="1" fill="#262626"/><rect x="782.5" y="432" width="1" height="180.8" fill="#262626"/><rect x="1024.5" y="432" width="1" height="180.8" fill="#262626"/><rect x="782.61" y="517.2" width="242.8" height="1" fill="#333"/><rect x="782.61" y="577.3" width="242.8" height="1" fill="#333"/><circle cx="812.11" cy="494.0" r="10.5" fill="#cc0000"/><polygon points="900.8100000000001,560.0 912.8100000000001,560.0 906.8100000000001,571.6" fill="#cc0000"/><rect x="788.51" y="580.25" width="13.9" height="30.3" fill="#008000"/><rect x="808.19" y="580.55" width="13.9" height="30" fill="#6fa8dc"/><rect x="827.87" y="582.05" width="13.9" height="28.5" fill="#6fa8dc"/><rect x="847.55" y="595.75" width="13.9" height="14.8" fill="#6fa8dc"/><rect x="867.23" y="586.15" width="13.9" height="24.4" fill="#6fa8dc"/><rect x="886.91" y="591.95" width="13.9" height="18.6" fill="#6fa8dc"/><rect x="906.59" y="599.05" width="13.9" height="11.5" fill="#6fa8dc"/><rect x="926.27" y="604.25" width="13.9" height="6.3" fill="#6fa8dc"/><rect x="945.95" y="608.55" width="13.9" height="2" fill="#6fa8dc"/><rect x="965.63" y="606.45" width="13.9" height="4.1" fill="#6fa8dc"/><rect x="985.31" y="608.55" width="13.9" height="2" fill="#cc4444"/><rect x="1004.99" y="605.05" width="13.9" height="5.5" fill="#6fa8dc"/><rect x="1029.48" y="432" width="242.8" height="180.8" fill="#fff"/><rect x="1029.48" y="432" width="242.8" height="27.5" fill="#3c82c6"/><rect x="1029.48" y="432" width="242.8" height="1" fill="#262626"/><rect x="1029.48" y="611.8" width="242.8" height="1" fill="#262626"/><rect x="1029.5" y="432" width="1" height="180.8" fill="#262626"/><rect x="1271.5" y="432" width="1" height="180.8" fill="#262626"/><rect x="1029.48" y="517.2" width="242.8" height="1" fill="#333"/><rect x="1029.48" y="577.3" width="242.8" height="1" fill="#333"/><circle cx="1058.98" cy="494.0" r="10.5" fill="#cc0000"/><polygon points="1147.68,571.6 1153.68,560.0 1159.68,571.6" fill="#cc0000"/><rect x="1035.38" y="580.25" width="13.9" height="30.3" fill="#008000"/><rect x="1055.06" y="605.05" width="13.9" height="5.5" fill="#6fa8dc"/><rect x="1074.74" y="608.55" width="13.9" height="2" fill="#cc4444"/><rect x="1094.42" y="597.05" width="13.9" height="13.5" fill="#6fa8dc"/><rect x="1114.1" y="597.05" width="13.9" height="13.5" fill="#6fa8dc"/><rect x="1133.78" y="602.15" width="13.9" height="8.4" fill="#6fa8dc"/><rect x="1153.46" y="601.55" width="13.9" height="9" fill="#6fa8dc"/><rect x="1173.14" y="602.95" width="13.9" height="7.6" fill="#6fa8dc"/><rect x="1192.82" y="600.75" width="13.9" height="9.8" fill="#6fa8dc"/><rect x="1212.5" y="602.15" width="13.9" height="8.4" fill="#6fa8dc"/><rect x="1232.18" y="604.25" width="13.9" height="6.3" fill="#6fa8dc"/><rect x="1251.86" y="602.95" width="13.9" height="7.6" fill="#6fa8dc"/></svg>
<div class="t" style="left:76.1px;top:138.7px;width:440px;height:36px;line-height:36px;font-size:23.12px;font-weight:700;color:#fff;">Retail KPI Scorecard in Google Sheets</div>
<div class="t" style="left:600px;top:148px;width:80px;height:16px;line-height:16px;font-size:11px;font-weight:700;color:#fff;">Select Month</div>
<div class="t" style="left:1012.9px;top:148.4px;width:30px;height:16px;line-height:16px;font-size:9.6px;font-weight:700;color:#fff;">Vs.</div>
<div style="left:678px;top:148px;width:97.5px;height:16px;background:#e8eaed;border-radius:8px"></div>
<div class="t" style="left:669.5px;top:148px;width:100px;height:16px;line-height:16px;text-align:center;font-size:13px;font-weight:700;color:#000;">May</div>
<svg class="a" style="left:759.6px;top:153.8px" width="8.4" height="4.4" viewBox="0 0 9 5" preserveAspectRatio="none"><path d="M0 0h9L4.5 5z" fill="#111"/></svg>
<div style="left:790.2px;top:148px;width:177px;height:16px;background:#e8eaed;border-radius:8px"></div>
<div class="t" style="left:821.6px;top:148px;width:100px;height:16px;line-height:16px;text-align:center;font-size:13px;font-weight:700;color:#000;">YTD</div>
<svg class="a" style="left:951.3000000000001px;top:153.8px" width="8.4" height="4.4" viewBox="0 0 9 5" preserveAspectRatio="none"><path d="M0 0h9L4.5 5z" fill="#111"/></svg>
<div style="left:1037.6px;top:148px;width:120px;height:16px;background:#e8eaed;border-radius:8px"></div>
<div class="t" style="left:1039.9px;top:148px;width:100px;height:16px;line-height:16px;text-align:center;font-size:13px;font-weight:700;color:#000;">Target</div>
<svg class="a" style="left:1141.6999999999998px;top:153.8px" width="8.4" height="4.4" viewBox="0 0 9 5" preserveAspectRatio="none"><path d="M0 0h9L4.5 5z" fill="#111"/></svg>
<div class="t" style="left:42.0px;top:212.5px;width:242.8px;height:20px;line-height:20px;text-align:center;font-size:12px;font-weight:700;color:#fff;">Sales Revenue</div>
<div class="t" style="left:93.0px;top:236.0px;width:200px;height:60px;line-height:60px;font-size:33.5px;font-weight:700;color:#3d85c6;text-align:center">84.2</div>
<div class="t" style="left:74.69999999999999px;top:295.9px;width:100px;height:17px;line-height:17px;text-align:right;font-size:10.67px;font-weight:700;color:#000;">Target Value:</div>
<div class="t" style="left:165.9px;top:295.9px;width:80px;height:17px;line-height:17px;text-align:center;font-size:10.67px;font-weight:700;color:#000;">80.0</div>
<div class="t" style="left:74.69999999999999px;top:313.2px;width:100px;height:17.5px;line-height:17.5px;text-align:right;font-size:10.67px;font-weight:700;color:#000;">Change:</div>
<div class="t" style="left:165.9px;top:313.2px;width:80px;height:17.5px;line-height:17.5px;text-align:center;font-size:10.67px;font-weight:700;color:#6aa84f;">+4.2</div>
<div class="t" style="left:165.9px;top:330.8px;width:80px;height:25.0px;line-height:25.0px;text-align:center;font-size:10.67px;font-weight:700;color:#6aa84f;">+5.3%</div>
<div class="t" style="left:288.87px;top:212.5px;width:242.8px;height:20px;line-height:20px;text-align:center;font-size:12px;font-weight:700;color:#fff;">Gross Profit Margin</div>
<div class="t" style="left:339.87px;top:236.0px;width:200px;height:60px;line-height:60px;font-size:33.5px;font-weight:700;color:#3d85c6;text-align:center">84.9</div>
<div class="t" style="left:321.57px;top:295.9px;width:100px;height:17px;line-height:17px;text-align:right;font-size:10.67px;font-weight:700;color:#000;">Target Value:</div>
<div class="t" style="left:412.77px;top:295.9px;width:80px;height:17px;line-height:17px;text-align:center;font-size:10.67px;font-weight:700;color:#000;">71.3</div>
<div class="t" style="left:321.57px;top:313.2px;width:100px;height:17.5px;line-height:17.5px;text-align:right;font-size:10.67px;font-weight:700;color:#000;">Change:</div>
<div class="t" style="left:412.77px;top:313.2px;width:80px;height:17.5px;line-height:17.5px;text-align:center;font-size:10.67px;font-weight:700;color:#6aa84f;">+13.6</div>
<div class="t" style="left:412.77px;top:330.8px;width:80px;height:25.0px;line-height:25.0px;text-align:center;font-size:10.67px;font-weight:700;color:#6aa84f;">+19.1%</div>
<div class="t" style="left:535.74px;top:212.5px;width:242.8px;height:20px;line-height:20px;text-align:center;font-size:12px;font-weight:700;color:#fff;">Net Profit Margin</div>
<div class="t" style="left:586.74px;top:236.0px;width:200px;height:60px;line-height:60px;font-size:33.5px;font-weight:700;color:#3d85c6;text-align:center">83.3</div>
<div class="t" style="left:568.44px;top:295.9px;width:100px;height:17px;line-height:17px;text-align:right;font-size:10.67px;font-weight:700;color:#000;">Target Value:</div>
<div class="t" style="left:659.64px;top:295.9px;width:80px;height:17px;line-height:17px;text-align:center;font-size:10.67px;font-weight:700;color:#000;">91.6</div>
<div class="t" style="left:568.44px;top:313.2px;width:100px;height:17.5px;line-height:17.5px;text-align:right;font-size:10.67px;font-weight:700;color:#000;">Change:</div>
<div class="t" style="left:659.64px;top:313.2px;width:80px;height:17.5px;line-height:17.5px;text-align:center;font-size:10.67px;font-weight:700;color:#cc0000;">-8.3</div>
<div class="t" style="left:659.64px;top:330.8px;width:80px;height:25.0px;line-height:25.0px;text-align:center;font-size:10.67px;font-weight:700;color:#cc0000;">-9.1%</div>
<div class="t" style="left:782.61px;top:212.5px;width:242.8px;height:20px;line-height:20px;text-align:center;font-size:12px;font-weight:700;color:#fff;">Average Transaction Value (ATV)</div>
<div class="t" style="left:833.61px;top:236.0px;width:200px;height:60px;line-height:60px;font-size:33.5px;font-weight:700;color:#3d85c6;text-align:center">83.8</div>
<div class="t" style="left:815.31px;top:295.9px;width:100px;height:17px;line-height:17px;text-align:right;font-size:10.67px;font-weight:700;color:#000;">Target Value:</div>
<div class="t" style="left:906.51px;top:295.9px;width:80px;height:17px;line-height:17px;text-align:center;font-size:10.67px;font-weight:700;color:#000;">62.8</div>
<div class="t" style="left:815.31px;top:313.2px;width:100px;height:17.5px;line-height:17.5px;text-align:right;font-size:10.67px;font-weight:700;color:#000;">Change:</div>
<div class="t" style="left:906.51px;top:313.2px;width:80px;height:17.5px;line-height:17.5px;text-align:center;font-size:10.67px;font-weight:700;color:#6aa84f;">+21.0</div>
<div class="t" style="left:906.51px;top:330.8px;width:80px;height:25.0px;line-height:25.0px;text-align:center;font-size:10.67px;font-weight:700;color:#6aa84f;">+33.4%</div>
<div class="t" style="left:1029.48px;top:212.5px;width:242.8px;height:20px;line-height:20px;text-align:center;font-size:12px;font-weight:700;color:#fff;">Conversion Rate</div>
<div class="t" style="left:1080.48px;top:236.0px;width:200px;height:60px;line-height:60px;font-size:33.5px;font-weight:700;color:#3d85c6;text-align:center">78.8</div>
<div class="t" style="left:1062.18px;top:295.9px;width:100px;height:17px;line-height:17px;text-align:right;font-size:10.67px;font-weight:700;color:#000;">Target Value:</div>
<div class="t" style="left:1153.38px;top:295.9px;width:80px;height:17px;line-height:17px;text-align:center;font-size:10.67px;font-weight:700;color:#000;">87.4</div>
<div class="t" style="left:1062.18px;top:313.2px;width:100px;height:17.5px;line-height:17.5px;text-align:right;font-size:10.67px;font-weight:700;color:#000;">Change</div>
<div class="t" style="left:1153.38px;top:313.2px;width:80px;height:17.5px;line-height:17.5px;text-align:center;font-size:10.67px;font-weight:700;color:#cc0000;">-8.6</div>
<div class="t" style="left:1153.38px;top:330.8px;width:80px;height:25.0px;line-height:25.0px;text-align:center;font-size:10.67px;font-weight:700;color:#cc0000;">-9.8%</div>
<div class="t" style="left:42.0px;top:436.2px;width:242.8px;height:20px;line-height:20px;text-align:center;font-size:12px;font-weight:700;color:#fff;">Foot Traffic</div>
<div class="t" style="left:93.0px;top:459.8px;width:200px;height:60px;line-height:60px;font-size:33.5px;font-weight:700;color:#3d85c6;text-align:center">84.8</div>
<div class="t" style="left:74.69999999999999px;top:518.4px;width:100px;height:17.5px;line-height:17.5px;text-align:right;font-size:10.67px;font-weight:700;color:#000;">Target Value:</div>
<div class="t" style="left:165.9px;top:518.4px;width:80px;height:17.5px;line-height:17.5px;text-align:center;font-size:10.67px;font-weight:700;color:#000;">98.4</div>
<div class="t" style="left:74.69999999999999px;top:536.2px;width:100px;height:17.5px;line-height:17.5px;text-align:right;font-size:10.67px;font-weight:700;color:#000;">Change</div>
<div class="t" style="left:165.9px;top:536.2px;width:80px;height:17.5px;line-height:17.5px;text-align:center;font-size:10.67px;font-weight:700;color:#cc0000;">-13.6</div>
<div class="t" style="left:165.9px;top:553.8px;width:80px;height:25.0px;line-height:25.0px;text-align:center;font-size:10.67px;font-weight:700;color:#cc0000;">-13.8%</div>
<div class="t" style="left:288.87px;top:436.2px;width:242.8px;height:20px;line-height:20px;text-align:center;font-size:12px;font-weight:700;color:#fff;">Units per Transaction (UPT)</div>
<div class="t" style="left:339.87px;top:459.8px;width:200px;height:60px;line-height:60px;font-size:33.5px;font-weight:700;color:#3d85c6;text-align:center">78.6</div>
<div class="t" style="left:321.57px;top:518.4px;width:100px;height:17.5px;line-height:17.5px;text-align:right;font-size:10.67px;font-weight:700;color:#000;">Target Value:</div>
<div class="t" style="left:412.77px;top:518.4px;width:80px;height:17.5px;line-height:17.5px;text-align:center;font-size:10.67px;font-weight:700;color:#000;">88.1</div>
<div class="t" style="left:321.57px;top:536.2px;width:100px;height:17.5px;line-height:17.5px;text-align:right;font-size:10.67px;font-weight:700;color:#000;">Change</div>
<div class="t" style="left:412.77px;top:536.2px;width:80px;height:17.5px;line-height:17.5px;text-align:center;font-size:10.67px;font-weight:700;color:#cc0000;">-9.5</div>
<div class="t" style="left:412.77px;top:553.8px;width:80px;height:25.0px;line-height:25.0px;text-align:center;font-size:10.67px;font-weight:700;color:#cc0000;">-10.8%</div>
<div class="t" style="left:535.74px;top:436.2px;width:242.8px;height:20px;line-height:20px;text-align:center;font-size:12px;font-weight:700;color:#fff;">Inventory Turnover</div>
<div class="t" style="left:586.74px;top:459.8px;width:200px;height:60px;line-height:60px;font-size:33.5px;font-weight:700;color:#3d85c6;text-align:center">90.0</div>
<div class="t" style="left:568.44px;top:518.4px;width:100px;height:17.5px;line-height:17.5px;text-align:right;font-size:10.67px;font-weight:700;color:#000;">Target Value:</div>
<div class="t" style="left:659.64px;top:518.4px;width:80px;height:17.5px;line-height:17.5px;text-align:center;font-size:10.67px;font-weight:700;color:#000;">90.9</div>
<div class="t" style="left:568.44px;top:536.2px;width:100px;height:17.5px;line-height:17.5px;text-align:right;font-size:10.67px;font-weight:700;color:#000;">Change</div>
<div class="t" style="left:659.64px;top:536.2px;width:80px;height:17.5px;line-height:17.5px;text-align:center;font-size:10.67px;font-weight:700;color:#cc0000;">-0.9</div>
<div class="t" style="left:659.64px;top:553.8px;width:80px;height:25.0px;line-height:25.0px;text-align:center;font-size:10.67px;font-weight:700;color:#cc0000;">-1.0%</div>
<div class="t" style="left:782.61px;top:436.2px;width:242.8px;height:20px;line-height:20px;text-align:center;font-size:12px;font-weight:700;color:#fff;">Sell-Through Rate</div>
<div class="t" style="left:833.61px;top:459.8px;width:200px;height:60px;line-height:60px;font-size:33.5px;font-weight:700;color:#3d85c6;text-align:center">86.2</div>
<div class="t" style="left:815.31px;top:518.4px;width:100px;height:17.5px;line-height:17.5px;text-align:right;font-size:10.67px;font-weight:700;color:#000;">Target Value:</div>
<div class="t" style="left:906.51px;top:518.4px;width:80px;height:17.5px;line-height:17.5px;text-align:center;font-size:10.67px;font-weight:700;color:#000;">99.0</div>
<div class="t" style="left:815.31px;top:536.2px;width:100px;height:17.5px;line-height:17.5px;text-align:right;font-size:10.67px;font-weight:700;color:#000;">Change</div>
<div class="t" style="left:906.51px;top:536.2px;width:80px;height:17.5px;line-height:17.5px;text-align:center;font-size:10.67px;font-weight:700;color:#cc0000;">-12.8</div>
<div class="t" style="left:906.51px;top:553.8px;width:80px;height:25.0px;line-height:25.0px;text-align:center;font-size:10.67px;font-weight:700;color:#cc0000;">-12.9%</div>
<div class="t" style="left:1029.48px;top:436.2px;width:242.8px;height:20px;line-height:20px;text-align:center;font-size:12px;font-weight:700;color:#fff;">Stockout Rate</div>
<div class="t" style="left:1080.48px;top:459.8px;width:200px;height:60px;line-height:60px;font-size:33.5px;font-weight:700;color:#3d85c6;text-align:center">84.4</div>
<div class="t" style="left:1062.18px;top:518.4px;width:100px;height:17.5px;line-height:17.5px;text-align:right;font-size:10.67px;font-weight:700;color:#000;">Target Value:</div>
<div class="t" style="left:1153.38px;top:518.4px;width:80px;height:17.5px;line-height:17.5px;text-align:center;font-size:10.67px;font-weight:700;color:#000;">66.7</div>
<div class="t" style="left:1062.18px;top:536.2px;width:100px;height:17.5px;line-height:17.5px;text-align:right;font-size:10.67px;font-weight:700;color:#000;">Change</div>
<div class="t" style="left:1153.38px;top:536.2px;width:80px;height:17.5px;line-height:17.5px;text-align:center;font-size:10.67px;font-weight:700;color:#cc0000;">+17.7</div>
<div class="t" style="left:1153.38px;top:553.8px;width:80px;height:25.0px;line-height:25.0px;text-align:center;font-size:10.67px;font-weight:700;color:#cc0000;">+26.5%</div>
</div>
</body></html>
